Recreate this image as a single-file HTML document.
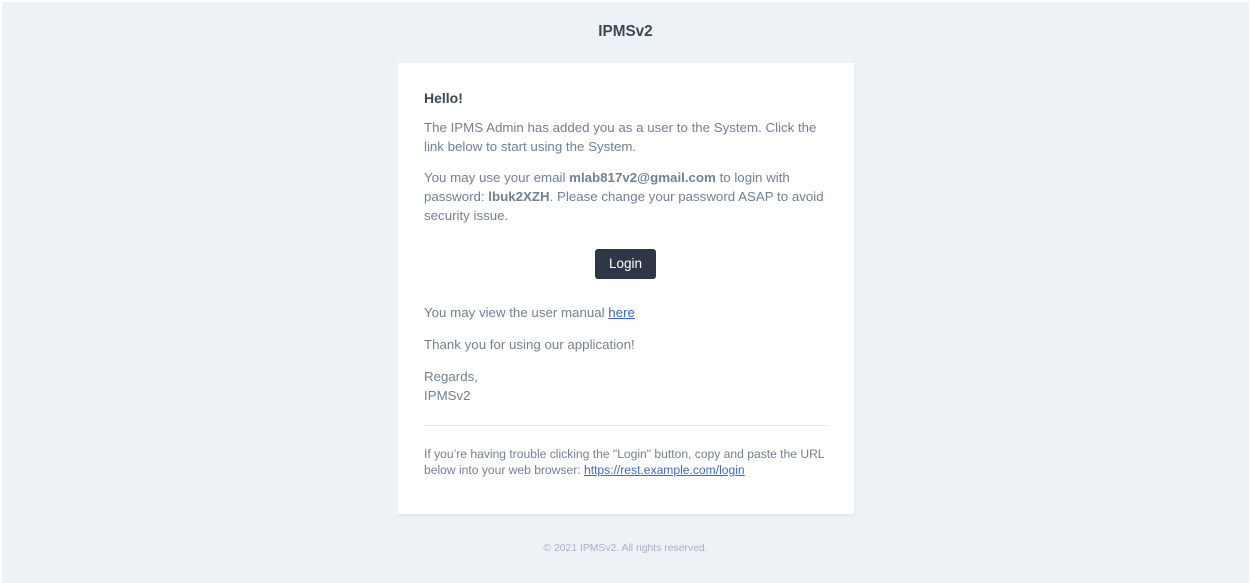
<!DOCTYPE html>
<html><head><style>
body{margin:0;width:1251px;height:583px;background:#fff;font-family:"Liberation Sans",sans-serif;overflow:hidden;position:relative}
.bg{position:absolute;left:2px;top:2px;width:1247px;height:581px;background:#edf2f7}
.t{position:absolute;white-space:nowrap;font-size:13.3px;color:#718096;line-height:19px}
.card{position:absolute;left:398px;top:63px;width:456px;height:451px;background:#fff;box-shadow:0 2px 0 rgba(0,0,150,0.025),2px 4px 0 rgba(0,0,150,0.015)}
b{color:#718096}
a{color:#3869d4;text-decoration:underline}
</style></head><body>
<div class="bg"></div>
<div class="t" style="left:0;width:1251px;text-align:center;top:22px;font-size:15.3px;font-weight:bold;color:#3d4852">IPMSv2</div>
<div class="card"></div>
<div class="t" style="left:424px;top:89px;font-weight:bold;font-size:14px;color:#3d4852">Hello!</div>
<div class="t" style="left:424px;top:118px">The IPMS Admin has added you as a user to the System. Click the<br>link below to start using the System.</div>
<div class="t" style="left:424px;top:168px">You may use your email <b>mlab817v2@gmail.com</b> to login with<br>password: <b>lbuk2XZH</b>. Please change your password ASAP to avoid<br>security issue.</div>
<div style="position:absolute;left:595px;top:249px;width:61px;height:30px;background:#2d3748;border-radius:3px;color:#fff;font-size:13.5px;line-height:30px;text-align:center">Login</div>
<div class="t" style="left:424px;top:303px">You may view the user manual <a>here</a></div>
<div class="t" style="left:424px;top:335px">Thank you for using our application!</div>
<div class="t" style="left:424px;top:367px">Regards,<br>IPMSv2</div>
<div style="position:absolute;left:424px;top:425px;width:404px;height:1px;background:#e8e5ef"></div>
<div class="t" style="left:424px;top:446px;font-size:12.1px;line-height:16px">If you’re having trouble clicking the "Login" button, copy and paste the URL<br>below into your web browser: <a>https://rest.example.com/login</a></div>
<div class="t" style="left:0;width:1251px;text-align:center;top:539px;font-size:10.4px;color:#b0adc5">© 2021 IPMSv2. All rights reserved.</div>
</body></html>
